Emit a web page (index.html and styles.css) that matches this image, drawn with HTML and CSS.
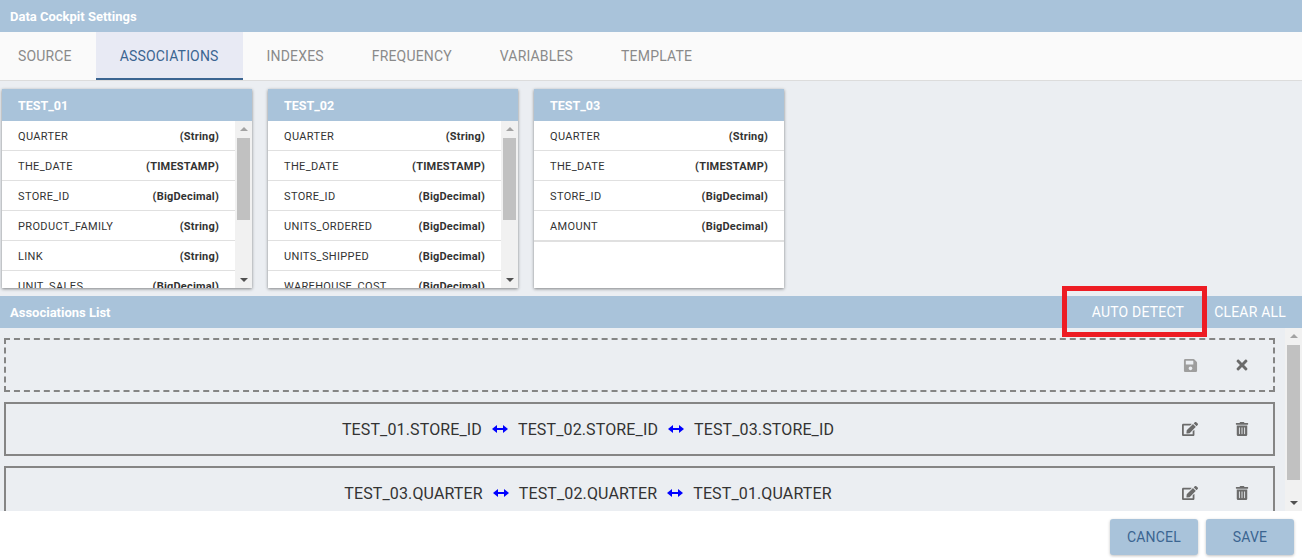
FILE: index.html
```html
<!DOCTYPE html>
<html lang="en">
<head>
    <meta charset="UTF-8">
    <title>Data Cockpit Settings</title>
    <link rel="stylesheet" href="styles.css">
</head>
<body>
    <svg class="icon-defs" width="0" height="0">
        <symbol id="i-save" viewBox="0 0 448 512"><path d="M433.941 129.941l-83.882-83.882A48 48 0 0 0 316.118 32H48C21.49 32 0 53.49 0 80v352c0 26.510 21.490 48 48 48h352c26.510 0 48-21.490 48-48V163.882a48 48 0 0 0-14.059-33.941zM224 416c-35.346 0-64-28.654-64-64 0-35.346 28.654-64 64-64s64 28.654 64 64c0 35.346-28.654 64-64 64zm96-304.520V212c0 6.627-5.373 12-12 12H76c-6.627 0-12-5.373-12-12V108c0-6.627 5.373-12 12-12h228.520c3.183 0 6.235 1.264 8.485 3.515l3.480 3.480A11.996 11.996 0 0 1 320 111.480z"/></symbol>
        <symbol id="i-close" viewBox="0 0 352 512"><path d="M242.72 256l100.070-100.070c12.280-12.280 12.280-32.190 0-44.480l-22.240-22.240c-12.280-12.280-32.190-12.280-44.480 0L176 189.280 75.930 89.210c-12.280-12.280-32.190-12.280-44.480 0L9.210 111.450c-12.280 12.280-12.280 32.190 0 44.480L109.280 256 9.210 356.070c-12.280 12.280-12.280 32.190 0 44.480l22.240 22.240c12.280 12.280 32.200 12.280 44.480 0L176 322.720l100.070 100.070c12.280 12.280 32.200 12.280 44.480 0l22.240-22.240c12.280-12.280 12.280-32.190 0-44.480L242.720 256z"/></symbol>
        <symbol id="i-edit" viewBox="0 0 576 512"><path d="M402.600 83.200l90.200 90.200c3.800 3.800 3.800 10 0 13.800L274.400 405.600l-92.800 10.300c-12.400 1.400-22.900-9.100-21.500-21.500l10.300-92.800L388.800 83.200c3.800-3.800 10-3.800 13.800 0zm162-22.900l-48.800-48.800c-15.200-15.200-39.900-15.200-55.200 0l-35.400 35.400c-3.800 3.800-3.800 10 0 13.800l90.200 90.200c3.800 3.800 10 3.800 13.800 0l35.400-35.400c15.200-15.300 15.200-40 0-55.200zM384 346.200V448H64V128h229.800c3.200 0 6.200-1.300 8.500-3.500l40-40c7.600-7.600 2.200-20.500-8.500-20.500H48C21.500 64 0 85.500 0 112v352c0 26.500 21.500 48 48 48h352c26.500 0 48-21.500 48-48V306.200c0-10.700-12.900-16-20.500-8.500l-40 40c-2.200 2.300-3.500 5.300-3.500 8.500z"/></symbol>
        <symbol id="i-trash" viewBox="0 0 448 512"><path d="M32 464a48 48 0 0 0 48 48h288a48 48 0 0 0 48-48V128H32zm272-256a16 16 0 0 1 32 0v224a16 16 0 0 1-32 0zm-96 0a16 16 0 0 1 32 0v224a16 16 0 0 1-32 0zm-96 0a16 16 0 0 1 32 0v224a16 16 0 0 1-32 0zM432 32H312l-9-19a24 24 0 0 0-21.500-13h-114.300a23.700 23.700 0 0 0-21.400 13l-9 19H16A16 16 0 0 0 0 48v32a16 16 0 0 0 16 16h416a16 16 0 0 0 16-16V48a16 16 0 0 0-16-16z"/></symbol>
        <symbol id="i-link" viewBox="0 0 16 10"><path d="M0 5l5-4v3h6V1l5 4-5 4V6H5v3z"/></symbol>
    </svg>

    <div class="toolbar">Data Cockpit Settings</div>

    <div class="tabs">
        <div class="tab first">Source</div>
        <div class="tab active">Associations</div>
        <div class="tab">Indexes</div>
        <div class="tab">Frequency</div>
        <div class="tab">Variables</div>
        <div class="tab">Template</div>
    </div>

    <div class="cards">
        <div class="card">
            <div class="card-title">TEST_01</div>
            <div class="card-body">
                <div class="rows">
                    <div class="row"><span>QUARTER</span><b>(String)</b></div>
                    <div class="row"><span>THE_DATE</span><b>(TIMESTAMP)</b></div>
                    <div class="row"><span>STORE_ID</span><b>(BigDecimal)</b></div>
                    <div class="row"><span>PRODUCT_FAMILY</span><b>(String)</b></div>
                    <div class="row"><span>LINK</span><b>(String)</b></div>
                    <div class="row"><span>UNIT_SALES</span><b>(BigDecimal)</b></div>
                </div>
                <div class="scrollbar">
                    <div class="arrow-up"></div>
                    <div class="thumb card-thumb"></div>
                    <div class="arrow-down"></div>
                </div>
            </div>
        </div>

        <div class="card">
            <div class="card-title">TEST_02</div>
            <div class="card-body">
                <div class="rows">
                    <div class="row"><span>QUARTER</span><b>(String)</b></div>
                    <div class="row"><span>THE_DATE</span><b>(TIMESTAMP)</b></div>
                    <div class="row"><span>STORE_ID</span><b>(BigDecimal)</b></div>
                    <div class="row"><span>UNITS_ORDERED</span><b>(BigDecimal)</b></div>
                    <div class="row"><span>UNITS_SHIPPED</span><b>(BigDecimal)</b></div>
                    <div class="row"><span>WAREHOUSE_COST</span><b>(BigDecimal)</b></div>
                </div>
                <div class="scrollbar">
                    <div class="arrow-up"></div>
                    <div class="thumb card-thumb"></div>
                    <div class="arrow-down"></div>
                </div>
            </div>
        </div>

        <div class="card">
            <div class="card-title">TEST_03</div>
            <div class="card-body">
                <div class="rows short">
                    <div class="row"><span>QUARTER</span><b>(String)</b></div>
                    <div class="row"><span>THE_DATE</span><b>(TIMESTAMP)</b></div>
                    <div class="row"><span>STORE_ID</span><b>(BigDecimal)</b></div>
                    <div class="row"><span>AMOUNT</span><b>(BigDecimal)</b></div>
                </div>
            </div>
        </div>
    </div>

    <div class="toolbar list-bar">
        <span>Associations List</span>
        <div class="bar-actions">
            <div class="bar-button">Auto Detect</div>
            <div class="bar-button">Clear All</div>
        </div>
        <div class="highlight"></div>
    </div>

    <div class="list-wrap">
        <div class="list">
            <div class="assoc draft">
                <div class="assoc-text"></div>
                <div class="assoc-actions">
                    <div class="action faded"><svg class="icon save"><use href="#i-save"/></svg></div>
                    <div class="action"><svg class="icon"><use href="#i-close"/></svg></div>
                </div>
            </div>
            <div class="assoc">
                <div class="assoc-text">
                    <span>TEST_01.STORE_ID</span>
                    <svg class="link"><use href="#i-link"/></svg>
                    <span>TEST_02.STORE_ID</span>
                    <svg class="link"><use href="#i-link"/></svg>
                    <span>TEST_03.STORE_ID</span>
                </div>
                <div class="assoc-actions">
                    <div class="action"><svg class="icon"><use href="#i-edit"/></svg></div>
                    <div class="action"><svg class="icon trash"><use href="#i-trash"/></svg></div>
                </div>
            </div>
            <div class="assoc">
                <div class="assoc-text">
                    <span>TEST_03.QUARTER</span>
                    <svg class="link"><use href="#i-link"/></svg>
                    <span>TEST_02.QUARTER</span>
                    <svg class="link"><use href="#i-link"/></svg>
                    <span>TEST_01.QUARTER</span>
                </div>
                <div class="assoc-actions">
                    <div class="action"><svg class="icon"><use href="#i-edit"/></svg></div>
                    <div class="action"><svg class="icon trash"><use href="#i-trash"/></svg></div>
                </div>
            </div>
        </div>
        <div class="scrollbar">
            <div class="arrow-up"></div>
            <div class="thumb list-thumb"></div>
            <div class="arrow-down"></div>
        </div>
    </div>

    <div class="footer">
        <div class="footer-button">Cancel</div>
        <div class="footer-button">Save</div>
    </div>
</body>
</html>
```

FILE: styles.css
```css
* {
    box-sizing: border-box;
}

html, body {
    margin: 0;
    height: 558px;
    overflow: hidden;
}

body {
    display: flex;
    flex-direction: column;
    font-family: Roboto, "Liberation Sans", sans-serif;
    color: #212121;
    background-color: #ebeef2;
}

.icon-defs {
    position: absolute;
}

.toolbar {
    display: flex;
    align-items: center;
    flex: none;
    height: 32px;
    padding-left: 10px;
    font-size: 13px;
    font-weight: 700;
    color: #fff;
    background-color: #a9c3da;
}

/* tabs */
.tabs {
    display: flex;
    flex: none;
    height: 49px;
    background-color: #fafafa;
    border-bottom: 1px solid #dcdcdc;
}

.tab {
    padding: 0 24px;
    line-height: 48px;
    font-size: 14px;
    letter-spacing: 0.17px;
    text-transform: uppercase;
    color: #8a8a8a;
}

.tab.first {
    padding-left: 18px;
}

.tab.active {
    height: 48px;
    color: #3b6591;
    background-color: #e8eaf4;
    border-bottom: 2px solid #3b6591;
}

/* cards */
.cards {
    display: flex;
    flex: none;
    gap: 16px;
    height: 215px;
    padding: 8px 2px;
}

.card {
    display: flex;
    flex-direction: column;
    width: 250px;
    background-color: #fff;
    box-shadow: 0 1px 3px rgba(0, 0, 0, 0.45);
}

.card-title {
    flex: none;
    height: 32px;
    padding: 1px 0 0 16px;
    line-height: 31px;
    font-size: 12.5px;
    font-weight: 700;
    color: #fff;
    background-color: #a9c3da;
}

.card-body {
    display: flex;
    flex: 1;
    min-height: 0;
}

.rows {
    flex: 1;
    min-width: 0;
    overflow: hidden;
}

.rows.short {
    align-self: flex-start;
    border-bottom: 1px solid #e0e0e0;
}

.row {
    display: flex;
    justify-content: space-between;
    align-items: center;
    height: 30px;
    padding: 1px 16px 0;
    font-size: 11px;
    letter-spacing: 0.35px;
    color: #333;
    border-bottom: 1px solid #e0e0e0;
}

.row b {
    font-weight: 700;
    letter-spacing: 0.2px;
}

/* scrollbars are drawn, the shot has no native ones */
.scrollbar {
    display: flex;
    flex-direction: column;
    align-items: center;
    flex: none;
    width: 17px;
    background-color: #f1f1f1;
}

.thumb {
    width: 13px;
    background-color: #c1c1c1;
}

.card-thumb {
    height: 82px;
    margin-top: 4px;
}

.list-thumb {
    height: 135px;
    margin-top: 4px;
}

.arrow-up,
.arrow-down {
    flex: none;
    width: 0;
    border-left: 4px solid transparent;
    border-right: 4px solid transparent;
}

.arrow-up {
    margin-top: 6px;
    border-bottom: 4px solid #a3a3a3;
    margin-bottom: 3px;
}

.arrow-down {
    margin-top: auto;
    margin-bottom: 6px;
    border-top: 4px solid #505050;
}

/* associations list */
.list-bar {
    position: relative;
    justify-content: space-between;
}

.bar-actions {
    display: flex;
    align-items: center;
    gap: 14px;
    padding-right: 8px;
}

.bar-button {
    padding: 0 8px;
    font-size: 14px;
    font-weight: 400;
    letter-spacing: 0.2px;
    text-transform: uppercase;
}

.highlight {
    position: absolute;
    left: 1062px;
    top: -10px;
    width: 145px;
    height: 51px;
    border: 5px solid #ed1c24;
}

.list-wrap {
    display: flex;
    flex: none;
    height: 183px;
    overflow: hidden;
}

.list {
    flex: 1;
    min-width: 0;
    padding: 10px 10px 0 4px;
}

.assoc {
    display: flex;
    align-items: center;
    height: 54px;
    margin-bottom: 10px;
    padding-right: 11px;
    border: 2px solid #858585;
}

.assoc.draft {
    border-style: dashed;
}

.assoc-text {
    display: flex;
    justify-content: center;
    align-items: center;
    flex: 1;
    gap: 10px;
    font-size: 16px;
    letter-spacing: 0.13px;
    color: #333;
}

.link {
    width: 16px;
    height: 10px;
    fill: #0000ff;
}

.assoc-actions {
    display: flex;
    gap: 12px;
}

.action {
    display: flex;
    justify-content: center;
    align-items: center;
    width: 40px;
    height: 16px;
    color: #6b6b6b;
}

.action.faded {
    color: #9e9e9e;
}

.icon {
    width: 16px;
    height: 16px;
    fill: currentColor;
}

.icon.save {
    width: 15px;
    height: 15px;
}

.icon.trash {
    width: 14px;
    height: 14px;
}

/* footer */
.footer {
    display: flex;
    justify-content: flex-end;
    flex: 1;
    gap: 8px;
    padding: 8px 8px 0 0;
    background-color: #fff;
}

.footer-button {
    width: 88px;
    height: 36px;
    line-height: 36px;
    text-align: center;
    font-size: 14px;
    letter-spacing: 0.2px;
    text-transform: uppercase;
    color: #3b6591;
    background-color: #a9c3da;
    border-radius: 3px;
    box-shadow: 0 1px 3px rgba(0, 0, 0, 0.25);
}
```
